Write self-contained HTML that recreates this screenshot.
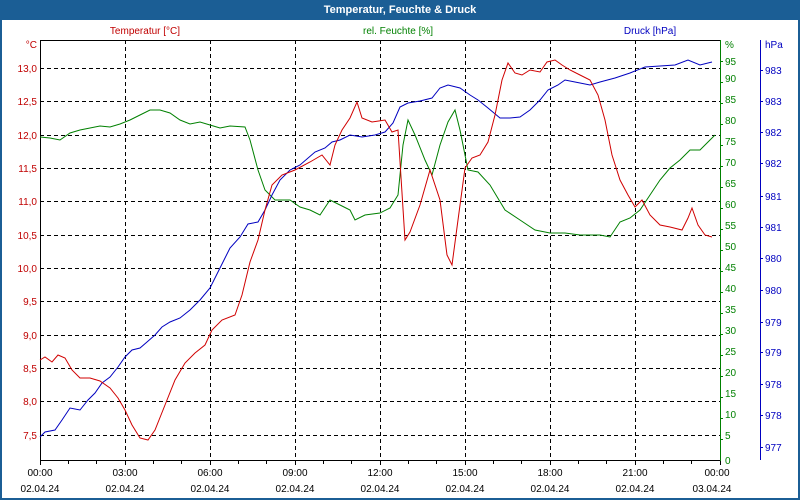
<!DOCTYPE html>
<html><head><meta charset="utf-8"><style>
html,body{margin:0;padding:0;width:800px;height:500px;overflow:hidden;background:#fff}
svg{display:block;font-family:"Liberation Sans",Arial,sans-serif}
</style></head><body>
<svg width="800" height="500" xmlns="http://www.w3.org/2000/svg">
<rect x="0" y="0" width="800" height="500" fill="#1b5e95"/>
<rect x="2" y="20" width="796" height="478" fill="#fff"/>
<text x="400" y="13" fill="#fff" font-size="11" font-weight="bold" text-anchor="middle">Temperatur, Feuchte &amp; Druck</text>
<g font-size="10">
<text x="145" y="34" fill="#c00000" text-anchor="middle">Temperatur [°C]</text>
<text x="398" y="34" fill="#008000" text-anchor="middle">rel. Feuchte [%]</text>
<text x="650" y="34" fill="#0000c0" text-anchor="middle">Druck [hPa]</text>
</g>
<g stroke="#000" stroke-dasharray="4,3" stroke-width="1">
<path d="M125.5 40V460M210.5 40V460M295.5 40V460M380.5 40V460M465.5 40V460M550.5 40V460M635.5 40V460"/>
<path d="M40 68.5H720M40 101.5H720M40 135.5H720M40 168.5H720M40 201.5H720M40 235.5H720M40 268.5H720M40 301.5H720M40 335.5H720M40 368.5H720M40 401.5H720M40 435.5H720"/>
</g>
<path d="M40.5 40V460.5H720" stroke="#000" fill="none"/>
<path d="M40 40.5H720" stroke="#000"/>
<path d="M40.5 461V465M68.5 461V464M96.5 461V464M125.5 461V465M153.5 461V464M181.5 461V464M210.5 461V465M238.5 461V464M266.5 461V464M295.5 461V465M323.5 461V464M351.5 461V464M380.5 461V465M408.5 461V464M436.5 461V464M465.5 461V465M493.5 461V464M521.5 461V464M550.5 461V465M578.5 461V464M606.5 461V464M635.5 461V465M663.5 461V464M691.5 461V464M720.5 461V465" stroke="#000"/>
<path d="M720.5 40V461" stroke="#008000"/>
<path d="M760.5 40V460" stroke="#0000c0"/>
<g font-size="10" fill="#c00000" text-anchor="end">
<text x="37" y="48">°C</text>
<text x="37" y="72">13,0</text><text x="37" y="105">12,5</text><text x="37" y="139">12,0</text><text x="37" y="172">11,5</text><text x="37" y="205">11,0</text><text x="37" y="239">10,5</text><text x="37" y="272">10,0</text><text x="37" y="305">9,5</text><text x="37" y="339">9,0</text><text x="37" y="372">8,5</text><text x="37" y="405">8,0</text><text x="37" y="439">7,5</text>
</g>
<g font-size="10" fill="#008000">
<text x="725" y="48">%</text>
<text x="725" y="65">95</text><text x="725" y="82">90</text><text x="725" y="103">85</text><text x="725" y="124">80</text><text x="725" y="145">75</text><text x="725" y="166">70</text><text x="725" y="187">65</text><text x="725" y="208">60</text><text x="725" y="229">55</text><text x="725" y="250">50</text><text x="725" y="271">45</text><text x="725" y="292">40</text><text x="725" y="313">35</text><text x="725" y="334">30</text><text x="725" y="355">25</text><text x="725" y="376">20</text><text x="725" y="397">15</text><text x="725" y="418">10</text><text x="725" y="439">5</text><text x="725" y="464">0</text>
</g>
<g stroke="#008000"><path d="M720 61.5h3M720 82.5h3M720 103.5h3M720 124.5h3M720 145.5h3M720 166.5h3M720 187.5h3M720 208.5h3M720 229.5h3M720 250.5h3M720 271.5h3M720 292.5h3M720 313.5h3M720 334.5h3M720 355.5h3M720 376.5h3M720 397.5h3M720 418.5h3M720 439.5h3"/></g>
<g font-size="10" fill="#0000c0">
<text x="765" y="48">hPa</text>
<text x="765" y="74">983</text><text x="765" y="105">983</text><text x="765" y="136">982</text><text x="765" y="167">982</text><text x="765" y="200">981</text><text x="765" y="231">981</text><text x="765" y="262">980</text><text x="765" y="294">980</text><text x="765" y="326">979</text><text x="765" y="356">979</text><text x="765" y="388">978</text><text x="765" y="419">978</text><text x="765" y="451">977</text>
</g>
<g stroke="#0000c0"><path d="M760 70.5h3M760 101.5h3M760 132.5h3M760 163.5h3M760 196.5h3M760 227.5h3M760 258.5h3M760 290.5h3M760 322.5h3M760 352.5h3M760 384.5h3M760 415.5h3M760 447.5h3"/></g>
<g font-size="10" fill="#000" text-anchor="middle">
<text x="40" y="476">00:00</text><text x="125" y="476">03:00</text><text x="210" y="476">06:00</text><text x="295" y="476">09:00</text><text x="380" y="476">12:00</text><text x="465" y="476">15:00</text><text x="550" y="476">18:00</text><text x="635" y="476">21:00</text><text x="717" y="476">00:00</text>
<text x="40" y="492">02.04.24</text><text x="125" y="492">02.04.24</text><text x="210" y="492">02.04.24</text><text x="295" y="492">02.04.24</text><text x="380" y="492">02.04.24</text><text x="465" y="492">02.04.24</text><text x="550" y="492">02.04.24</text><text x="635" y="492">02.04.24</text><text x="712" y="492">03.04.24</text>
</g>
<g fill="none" stroke-width="1">
<polyline stroke="#008000" points="40,137 50,138 60,140 70,133 80,130 90,128 100,126 110,127 120,124 130,120 140,115 150,110 160,110 170,113 180,120 190,124 200,122 210,125 220,128 230,126 245,127 250,140 258,170 265,190 275,200 290,200 300,207 310,210 320,215 330,200 340,205 350,210 355,220 365,215 380,213 390,208 398,195 403,145 408,120 415,135 425,160 432,175 440,145 448,122 455,110 460,130 468,170 478,172 490,185 505,210 520,220 535,230 550,233 565,233 580,235 600,235 610,237 620,222 630,218 640,210 650,195 660,180 670,168 680,160 690,150 700,150 710,140 715,135"/>
<polyline stroke="#0000c0" points="40,437 45,432 55,430 62,420 70,408 80,410 88,400 95,393 102,383 110,377 118,367 125,357 132,350 140,348 147,342 155,335 162,327 170,322 180,318 190,310 200,300 210,288 220,268 230,248 240,237 248,224 258,222 265,210 272,195 280,180 290,170 300,165 315,152 325,148 332,142 340,140 350,135 362,137 375,135 385,132 393,123 400,107 408,103 420,101 432,98 440,88 448,85 460,88 470,95 478,100 488,108 500,118 510,118 520,117 530,110 540,100 548,90 558,85 565,80 575,82 590,85 600,82 615,78 630,73 645,67 660,66 675,65 688,60 700,65 712,62"/>
<polyline stroke="#d00000" points="40,360 45,357 52,362 58,355 65,358 72,370 80,378 90,378 100,381 110,388 118,398 125,410 132,425 140,438 148,440 155,430 165,405 175,380 185,363 195,353 205,345 212,330 222,320 235,315 242,295 250,262 258,240 265,210 272,185 282,175 295,170 310,162 322,155 330,165 335,145 342,130 350,118 357,102 362,118 372,122 385,120 392,132 398,130 405,240 410,232 420,205 430,170 440,200 447,255 452,265 458,220 465,168 472,158 480,155 488,142 495,115 502,80 508,63 515,73 522,75 530,70 540,72 547,62 555,60 562,65 570,70 580,75 590,80 598,95 605,120 612,155 620,180 628,195 635,207 642,200 650,215 660,225 670,227 682,230 688,218 692,208 698,225 705,235 712,237"/>
</g>
</svg>
</body></html>
